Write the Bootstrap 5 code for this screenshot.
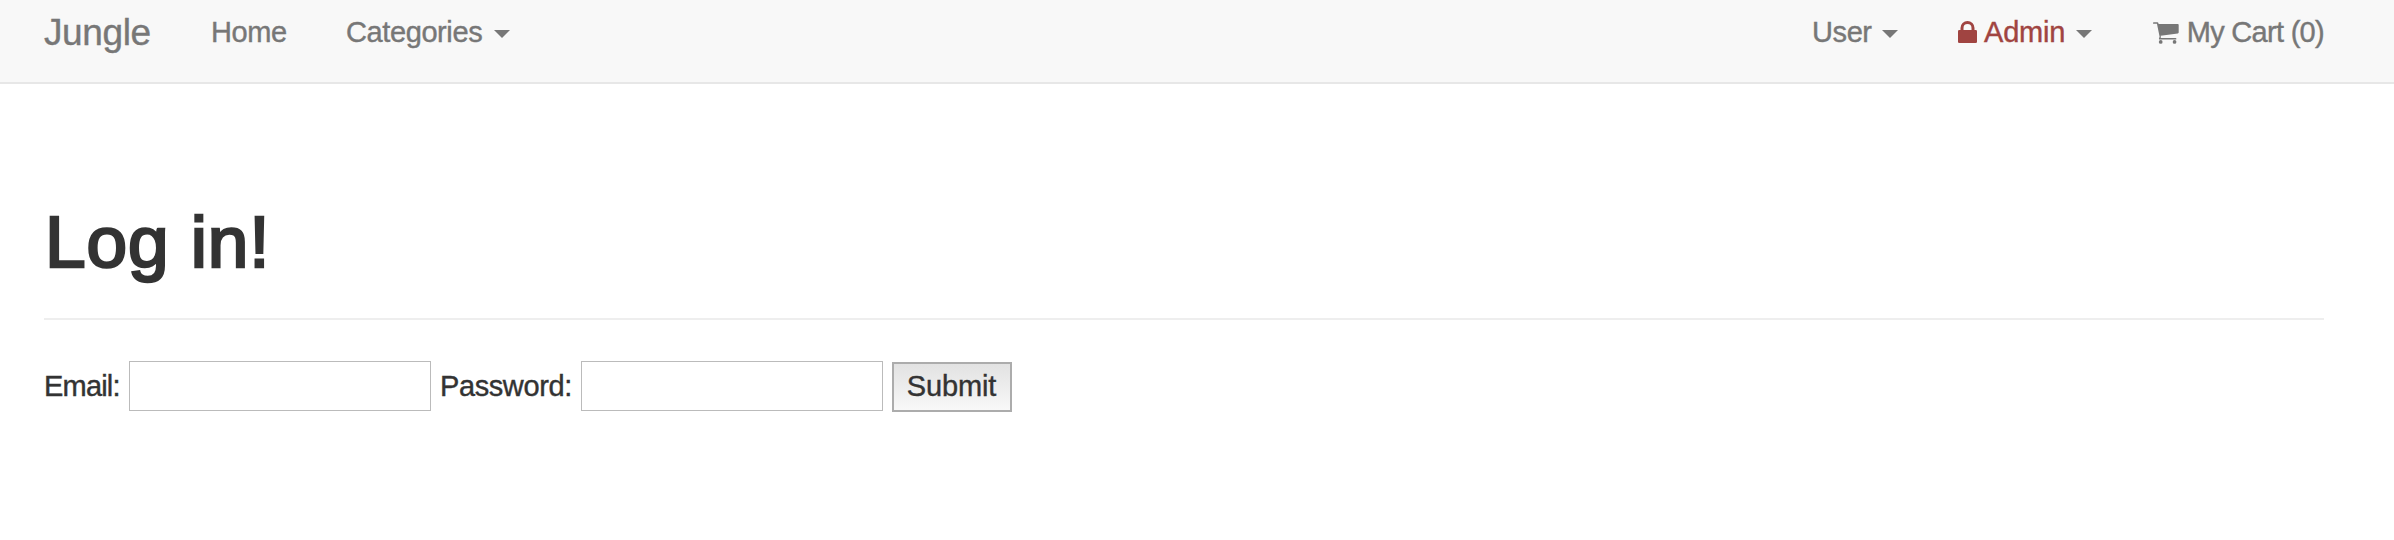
<!DOCTYPE html>
<html lang="en">
<head>
<meta charset="utf-8">
<title>Jungle</title>
<link rel="stylesheet" href="https://cdn.jsdelivr.net/npm/bootstrap@5.3.0/dist/css/bootstrap.min.css">
<style>
  body { font-family: "Liberation Sans", Arial, sans-serif; font-size: 29px; line-height: 40px; color: #333; background: #fff; }
  .site-nav, .login-form { -webkit-text-stroke: .4px currentColor; }
  .site-nav { height: 84px; padding: 0 70px 0 44px; background: #f8f8f8; border-bottom: 2px solid #e7e7e7; align-items: flex-start; }
  .site-nav a { color: #777; line-height: 40px; padding: 12px 0 0; white-space: nowrap; }
  .site-nav .navbar-brand { width: 167px; margin: 0; font-size: 37px; line-height: 42px; letter-spacing: -.4px; }
  .site-nav .dropdown-toggle::after { margin: 0 0 0 auto; border-top: 8px solid #777; border-right: 8px solid transparent; border-left: 8px solid transparent; border-bottom: 0; position: relative; top: 2px; }
  .site-nav .dropdown-toggle { display: flex; align-items: center; }
  .home-link { width: 135px; letter-spacing: -.4px; }
  .cat-link { width: 164px; letter-spacing: -.4px; }
  .user-link { width: 86px; letter-spacing: -.4px; }
  .site-nav .admin-link { width: 134px; margin-left: 60px; color: #a04441; letter-spacing: -.2px; }
  .cart-link { width: 171px; margin-left: 61px; letter-spacing: -.7px; }
  .lock-icon { width: 19px; height: 22px; margin: 0 7px 0 0; }
  .cart-icon { width: 26px; height: 22px; margin: 2px 8px 0 0; }
  .login-page { padding: 120px 70px 0 44px; }
  .login-page h1 { margin: 0; height: 114px; padding-left: 1px; font-size: 73px; font-weight: 400; line-height: 76px; letter-spacing: .9px; -webkit-text-stroke: 2.6px #333; }
  .login-page hr { margin: 0; border-top: 2px solid #eee; opacity: 1; }
  .login-form { margin-top: 41px; height: 51px; }
  .login-form label { line-height: 51px; white-space: nowrap; }
  .email-label { width: 85px; letter-spacing: -.8px; }
  .password-label { width: 141px; margin-left: 9px; letter-spacing: -.4px; }
  .login-form .form-control { width: 302px; height: 50px; border: 1px solid #bbb; border-radius: 0; font-size: 28px; padding: 4px; }
  .login-form .btn { width: 120px; height: 50px; margin: 1px 0 0 9px; padding: 0 1px 0 0; border: 2px solid #acacac; border-radius: 0; background: linear-gradient(#e2e2e2, #f8f8f8); color: #333; font-size: 29px; line-height: 42px; padding-bottom: 2px; letter-spacing: -.1px; }
</style>
</head>
<body>
<nav class="site-nav navbar flex-nowrap">
  <a class="navbar-brand" href="#">Jungle</a>
  <a class="home-link text-decoration-none" href="#">Home</a>
  <a class="cat-link dropdown-toggle text-decoration-none" href="#">Categories</a>
  <div class="d-flex ms-auto">
    <a class="user-link dropdown-toggle text-decoration-none" href="#">User</a>
    <a class="admin-link dropdown-toggle text-decoration-none" href="#">
      <svg class="lock-icon" viewBox="0 0 19 22" fill="none" aria-hidden="true">
        <path d="M4 10V7a5.5 5.5 0 0 1 11 0v3" stroke="currentColor" stroke-width="3"/>
        <rect y="9" width="19" height="13" rx="1.3" fill="currentColor"/>
      </svg>Admin</a>
    <a class="cart-link d-flex align-items-center text-decoration-none" href="#">
      <svg class="cart-icon" viewBox="0 0 26 22" fill="currentColor" aria-hidden="true">
        <path d="M.8 0H4.6q.9 0 1.1 2H25.2q.8 0 .8.8V10.500q0 .8-.9.9L7.700 13.700q.5 1.100.1 2.300H22.800q.9 0 .9.850t-.9.850H7q-1.200 0-1-1.200l.7-1.600L4 1.700H.8Q0 1.700 0 .850T.8 0Z"/>
        <circle cx="7.800" cy="20.100" r="1.900"/><circle cx="21.800" cy="20.100" r="1.900"/>
      </svg>My Cart (0)</a>
  </div>
</nav>
<main class="login-page">
  <h1>Log in!</h1>
  <hr>
  <form class="login-form d-flex align-items-start">
    <label class="email-label" for="email">Email:</label>
    <input class="form-control" id="email" type="email">
    <label class="password-label" for="password">Password:</label>
    <input class="form-control" id="password" type="password">
    <button class="btn" type="button">Submit</button>
  </form>
</main>
<script src="https://cdn.jsdelivr.net/npm/bootstrap@5.3.0/dist/js/bootstrap.bundle.min.js"></script>
</body>
</html>
